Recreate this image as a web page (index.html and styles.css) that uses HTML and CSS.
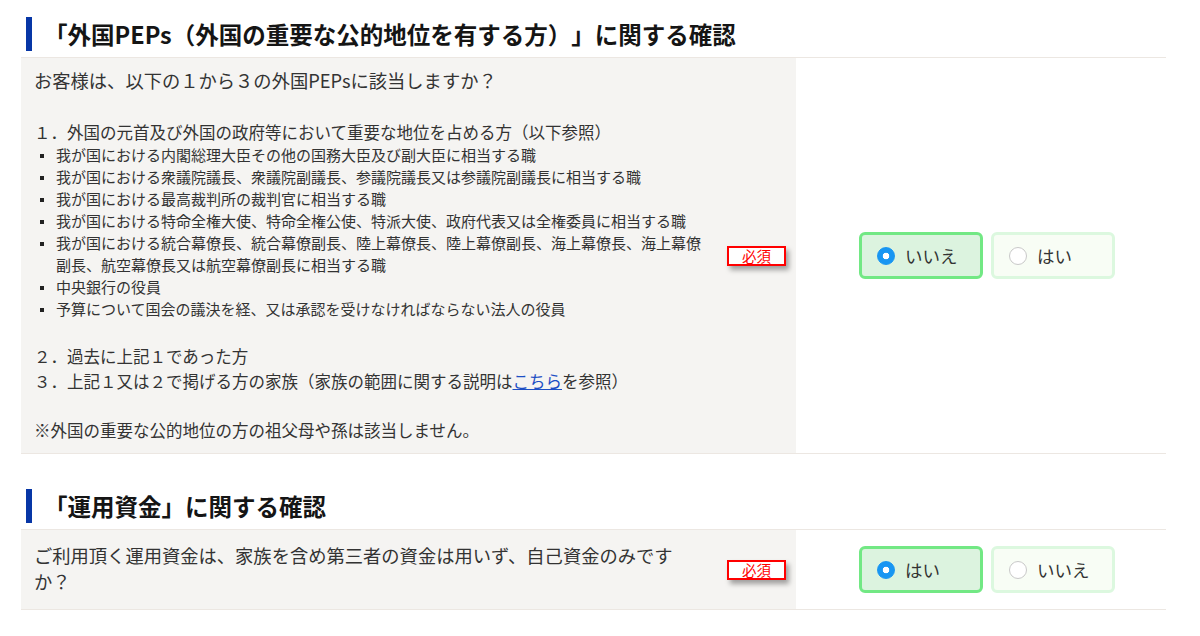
FILE: index.html
```html
<!DOCTYPE html>
<html lang="ja">
  <head>
    <meta charset="utf-8">
    <title>お客様情報の確認</title>
    <link rel="stylesheet" href="styles.css">
  </head>
  <body>
    <div class="page">
      <section class="block">
        <h2 class="block-title">「外国PEPs（外国の重要な公的地位を有する方）」に関する確認</h2>
        <div class="row">
          <div class="question">
            <div class="question-text">
              <p class="lead">お客様は、以下の１から３の外国PEPsに該当しますか？</p>
              <p class="item item-first">１．外国の元首及び外国の政府等において重要な地位を占める方（以下参照）</p>
              <ul class="posts">
                <li>我が国における内閣総理大臣その他の国務大臣及び副大臣に相当する職</li>
                <li>我が国における衆議院議長、衆議院副議長、参議院議長又は参議院副議長に相当する職</li>
                <li>我が国における最高裁判所の裁判官に相当する職</li>
                <li>我が国における特命全権大使、特命全権公使、特派大使、政府代表又は全権委員に相当する職</li>
                <li>我が国における統合幕僚長、統合幕僚副長、陸上幕僚長、陸上幕僚副長、海上幕僚長、海上幕僚副長、航空幕僚長又は航空幕僚副長に相当する職</li>
                <li>中央銀行の役員</li>
                <li>予算について国会の議決を経、又は承認を受けなければならない法人の役員</li>
              </ul>
              <p class="item item-gap">２．過去に上記１であった方</p>
              <p class="item">３．上記１又は２で掲げる方の家族（家族の範囲に関する説明は<a href="#">こちら</a>を参照）</p>
              <p class="item item-gap">※外国の重要な公的地位の方の祖父母や孫は該当しません。</p>
            </div>
            <span class="required">必須</span>
          </div>
          <div class="answer">
            <label class="choice is-checked"><span class="radio"></span>いいえ</label>
            <label class="choice"><span class="radio"></span>はい</label>
          </div>
        </div>
      </section>

      <section class="block block-next">
        <h2 class="block-title">「運用資金」に関する確認</h2>
        <div class="row">
          <div class="question">
            <div class="question-text question-short">
              <p class="lead">ご利用頂く運用資金は、家族を含め第三者の資金は用いず、自己資金のみですか？</p>
            </div>
            <span class="required">必須</span>
          </div>
          <div class="answer">
            <label class="choice is-checked"><span class="radio"></span>はい</label>
            <label class="choice"><span class="radio"></span>いいえ</label>
          </div>
        </div>
      </section>
    </div>
  </body>
</html>
```

FILE: styles.css
```css
body {
  margin: 0;
  background: #fff;
  color: #333;
  font-family: "Noto Sans CJK JP", "Noto Sans", sans-serif;
  text-spacing-trim: space-all;
}
.page {
  width: 1145px;
  padding: 17px 0 0 21px;
}
.block-next {
  margin-top: 35px;
}
.block-title {
  height: 34px;
  margin: 0 0 6px 5px;
  padding-left: 12px;
  border-left: 6px solid #0736a6;
  color: #151515;
  font-size: 23.5px;
  font-weight: bold;
  line-height: 34px;
  white-space: nowrap;
}
.row {
  display: flex;
  border-top: 1px solid #ece7e2;
  border-bottom: 1px solid #ece7e2;
}
.question {
  display: flex;
  align-items: center;
  flex-shrink: 0;
  width: 775px;
  background: #f5f4f2;
}
.question-text {
  flex: 1;
  padding: 9px 0 10px 13px;
}
.question-short {
  padding: 12px 0 15px 13px;
}
.question-short .lead {
  max-width: 662px;
}
.question-text p {
  margin: 0;
}
.lead {
  font-size: 18.3px;
  line-height: 26px;
}
.item {
  font-size: 16.5px;
  line-height: 25px;
}
.item-first {
  margin-top: 27px !important;
  line-height: 24px;
}
.item-gap {
  margin-top: 24px !important;
}
.item a {
  color: #1d4fc4;
  text-decoration: underline;
}
.posts {
  margin: 0;
  padding: 0;
  list-style: none;
}
.posts li {
  display: flex;
  font-size: 15px;
  line-height: 22px;
}
.posts li::before {
  content: "";
  flex: none;
  width: 4px;
  height: 4px;
  margin: 10px 12px 0 6px;
  background: #222;
}
.required {
  flex: none;
  box-sizing: border-box;
  width: 59px;
  height: 20px;
  margin: 0 10px 0 17px;
  border: 2px solid #f00;
  background: #fff;
  color: #f00;
  font-size: 14.5px;
  line-height: 16px;
  text-align: center;
  box-shadow: 3px 4px 5px rgba(0, 0, 0, 0.35);
}
.answer {
  display: flex;
  flex: 1;
  justify-content: center;
  align-items: center;
  gap: 8px;
  padding-left: 12px;
}
.choice {
  display: flex;
  align-items: center;
  gap: 10px;
  box-sizing: border-box;
  width: 124px;
  height: 47px;
  padding-left: 15px;
  border: 3px solid #dcf8df;
  border-radius: 6px;
  background: #f8fdf5;
  color: #333;
  font-size: 17.5px;
  cursor: pointer;
}
.choice.is-checked {
  border-color: #72e884;
  background: #dcf3df;
}
.radio {
  flex: none;
  box-sizing: border-box;
  width: 18px;
  height: 18px;
  border: 1px solid #c9c9c9;
  border-radius: 50%;
  background: #fff;
}
.is-checked .radio {
  border-color: #1896f2;
  background: radial-gradient(circle, #fff 0 3px, #1896f2 3.6px);
}
```
